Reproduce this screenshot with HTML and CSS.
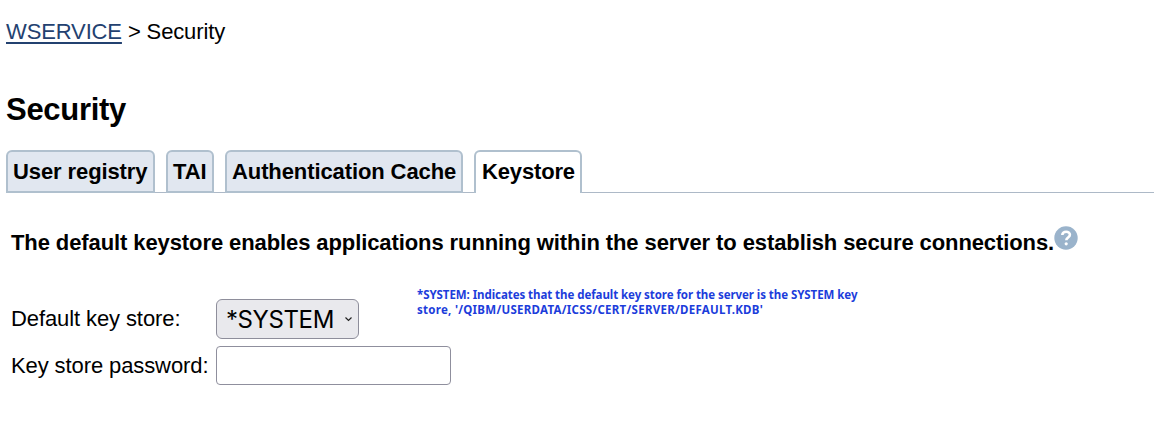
FILE: index.html
```html
<!DOCTYPE html>
<html lang="en"><head><meta charset="utf-8"><title>Security</title><link rel="stylesheet" href="styles.css"></head>
<body>
<nav class="crumbs"><a href="#">WSERVICE</a> &gt; Security</nav>
<h1 class="title">Security</h1>
<div class="tabs"><a class="tab t1">User registry</a><a class="tab t2">TAI</a><a class="tab t3">Authentication Cache</a><a class="tab t4 active">Keystore</a></div>
<main class="panel">
<div class="intro"><span class="intro-text">The default keystore enables applications running within the server to establish secure connections.</span><svg class="help" viewBox="0 0 24 24"><circle cx="12" cy="12" r="11.7" fill="#9ab3cb"/><path d="M8.300 9C8.600 4.800 15.900 4.800 15.900 8.800c0 2.600-3.600 2.700-3.600 5.400" fill="none" stroke="#fff" stroke-width="2.600"/><circle cx="12.200" cy="17.800" r="1.600" fill="#fff"/></svg></div>
<form class="form">
<label class="label">Default key store:</label><button type="button" class="select"><span class="value">*SYSTEM</span><svg class="chev" viewBox="0 0 8 6"><path d="M1 1.500 4 4.500 7 1.500" fill="none" stroke="#222" stroke-width="1.200"/></svg></button>
<p class="note"><span class="n1">*SYSTEM: Indicates that the default key store for the server is the SYSTEM key</span><br><span class="n2">store, '/QIBM/USERDATA/ICSS/CERT/SERVER/DEFAULT.KDB'</span></p>
<label class="label">Key store password:</label><input class="input" type="password">
</form>
</main></body></html>
```
FILE: styles.css
```css
*{box-sizing:border-box}
body{margin:0;background:#fff;color:#000;font:22px/26px "Liberation Sans",Arial,sans-serif;letter-spacing:-.1px;overflow:hidden}
.crumbs{padding:19px 6px 0;letter-spacing:-.13px}
.crumbs a{color:#234170;text-underline-offset:3px}
.title{margin:45px 6px 0;font-size:31px;line-height:40px;letter-spacing:-.3px}
.tabs{display:flex;gap:11px;height:43px;margin:20px 0 0 6px;border-bottom:1px solid #adb9c7}
.tab{height:43px;padding:6px 0 0 5px;border:2px solid #b0c0ce;border-radius:6px 6px 0 0;background:#e1e7f0;font-weight:bold;line-height:28px;white-space:nowrap}
.t1{width:149px}.t2{width:48px}.t3{width:238px}.t4{width:108px}
.active{background:#fff;border-bottom:0;letter-spacing:-.15px;padding-left:6px}
.panel{padding:33px 0 0 11px}
.intro{display:flex;height:34px;font-weight:bold;white-space:nowrap;letter-spacing:-.095px}
.intro-text{padding-top:4px}
.help{width:24px;height:24px}
.form{display:grid;grid-template-columns:205px 201px auto;grid-template-rows:40px 39px;row-gap:7px;align-items:center;justify-items:start;margin-top:39px}
.label{white-space:nowrap}
.select{display:flex;align-items:center;justify-content:space-between;width:143px;height:40px;padding:0 5px 0 9px;border:1px solid #8e8e9b;border-radius:6px;background:#e9e9ed;color:#000;font:24px Inter,sans-serif}
.value{letter-spacing:-.4px}
.chev{width:9px;height:6px}
.input{grid-column:2/4;width:235px;height:39px;border:1px solid #8f8f9d;border-radius:4px;background:#fff}
.note{align-self:start;margin:-12px 0 0;color:#1c3ddb;font:bold 11.5px/15px "Noto Sans",sans-serif;white-space:nowrap}
.n1{letter-spacing:-.065px}
.n2{letter-spacing:.27px}
```
